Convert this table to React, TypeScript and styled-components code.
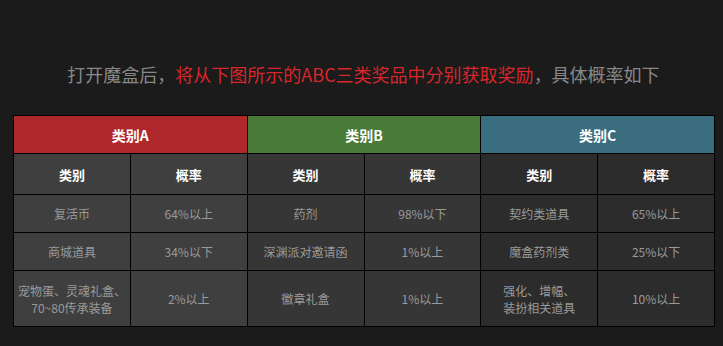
import React from 'react'
import styled, { createGlobalStyle } from 'styled-components'

const GlobalStyle = createGlobalStyle`
    html, body {
        margin: 0;
        padding: 0;
        background: #1b1b1b;
    }
    body {
        font-family: "Noto Sans CJK SC", "Noto Sans", "Liberation Sans", sans-serif;
    }
`

const Page = styled.div`
    width: 723px;
    height: 346px;
    padding-top: 62px;
    box-sizing: border-box;
`

const Title = styled.div`
    text-align: center;
    font-size: 18px;
    line-height: 24px;
    color: #888;
    padding-left: 4px;
    margin-bottom: 29px;
`

const Red = styled.span`
    color: #d8262a;
`

const Grid = styled.div`
    margin-left: 13px;
    width: 702px;
    display: grid;
    grid-template-columns: repeat(6, 1fr);
    grid-template-rows: 37px 40px 37px 37px 55px;
    gap: 1px;
    padding: 1px;
    box-sizing: border-box;
    background: #000;
`

const Head = styled.div<{ $bg: string }>`
    grid-column: span 2;
    background: ${p => p.$bg};
    color: #fff;
    font-size: 14px;
    font-weight: 700;
    display: flex;
    align-items: center;
    justify-content: center;
`

const Cell = styled.div<{ $bg: string; $head?: boolean }>`
    background: ${p => p.$bg};
    color: ${p => (p.$head ? '#fff' : '#9a9a9a')};
    font-size: ${p => (p.$head ? '13px' : '12px')};
    font-weight: ${p => (p.$head ? 700 : 400)};
    line-height: 17px;
    text-align: center;
    display: flex;
    align-items: center;
    justify-content: center;
`

const groups = [
    { name: '类别A', head: '#b0282b', bg: '#3f3f3f' },
    { name: '类别B', head: '#4a7a38', bg: '#363636' },
    { name: '类别C', head: '#3a6e7e', bg: '#2c2c2c' },
]

const rows: React.ReactNode[][] = [
    ['复活币', '64%以上', '药剂', '98%以下', '契约类道具', '65%以上'],
    ['商城道具', '34%以下', '深渊派对邀请函', '1%以上', '魔盒药剂类', '25%以下'],
    [
        <>宠物蛋、灵魂礼盒、<br />70~80传承装备</>,
        '2%以上',
        '徽章礼盒',
        '1%以上',
        <>强化、增幅、<br />装扮相关道具</>,
        '10%以上',
    ],
]

export default function App() {
    return (
        <>
            <GlobalStyle />
            <Page>
                <Title>
                    打开魔盒后，<Red>将从下图所示的ABC三类奖品中分别获取奖励</Red>，具体概率如下
                </Title>
                <Grid>
                    {groups.map(g => (
                        <Head key={g.name} $bg={g.head}>{g.name}</Head>
                    ))}
                    {groups.map(g => (
                        <React.Fragment key={g.name + 'sub'}>
                            <Cell $bg={g.bg} $head>类别</Cell>
                            <Cell $bg={g.bg} $head>概率</Cell>
                        </React.Fragment>
                    ))}
                    {rows.map((row, r) =>
                        row.map((v, i) => (
                            <Cell key={r + '-' + i} $bg={groups[Math.floor(i / 2)].bg}>{v}</Cell>
                        ))
                    )}
                </Grid>
            </Page>
        </>
    )
}
